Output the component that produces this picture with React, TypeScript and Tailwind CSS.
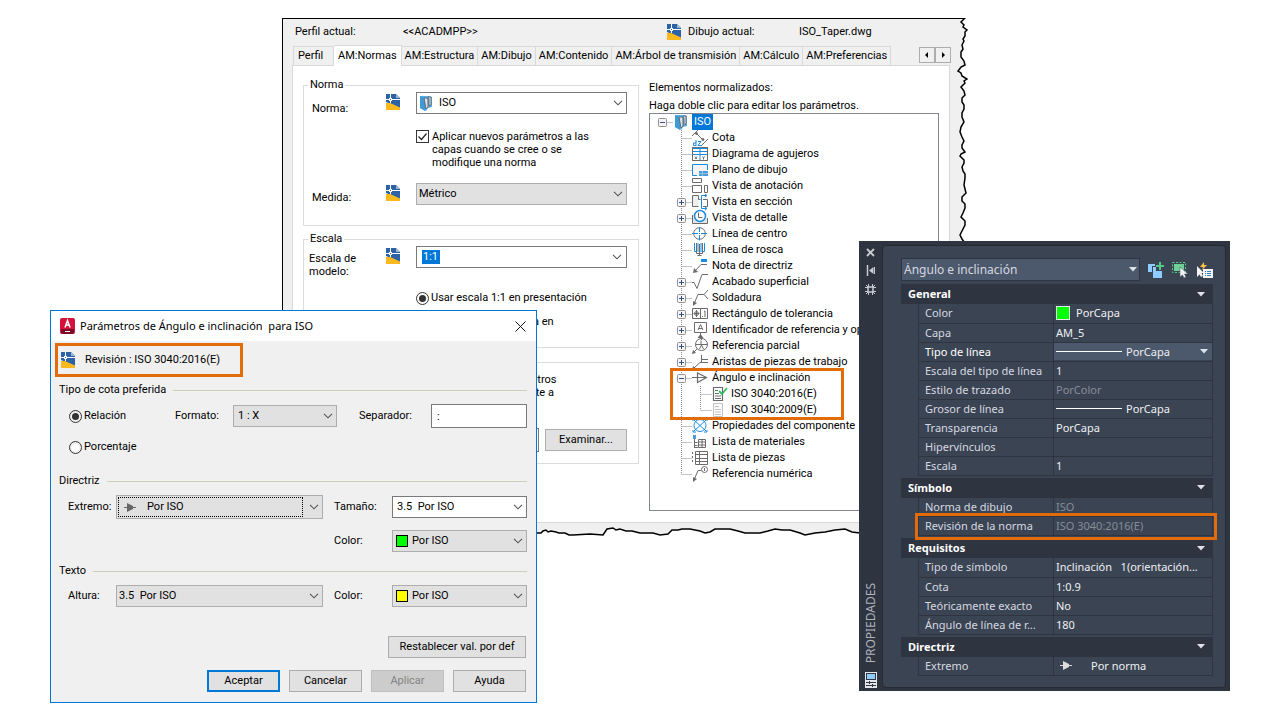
import { ReactNode } from 'react';
import clsx from 'clsx';

interface TreeItem {
  label: string;
  icon: ReactNode;
  expander?: 'plus' | 'minus';
  children?: { label: string; icon: ReactNode }[];
}

interface PropRow {
  name: string;
  value: string;
  kind?: 'text' | 'color' | 'line' | 'lineSelect' | 'arrow' | 'muted';
  marked?: boolean;
}

interface PropGroup {
  title: string;
  rows: PropRow[];
}

const GRAY = '#6b6b6b';
const BLUE = '#1b8ade';

/* ---------- icons ---------- */

function DwgIcon() {
  return (
    <svg width="15" height="16" viewBox="0 0 15 16" className="shrink-0">
      <path d="M0 0h10l4 4v10L0 8z" fill="#2c62a6" />
      <path d="M10 0l4 4h-4z" fill="#9fb6d3" />
      <path d="M0 9h4l10 4.500V16H0z" fill="#fbb81f" />
      <path d="M0 5.500h14M4.500 0v9" stroke="#fff" />
      <rect x="3" y="4" width="3" height="3" fill="#fff" />
      <rect x="4" y="5" width="1" height="1" fill="#2c62a6" />
    </svg>
  );
}

function BooksIcon() {
  return (
    <svg width="13" height="16" viewBox="0 0 13 16" className="shrink-0">
      <path d="M0 1h9l3 1v10l-4 1-2 3-6-3z" fill="#56b0e6" />
      <path d="M0 1l5 2v13l-5-3z" fill="#3f9bd6" />
      <path d="M4 3h3l1 1v8l-2 2z" fill="#d9e1e8" stroke="#5b6b78" />
      <path d="M8 2h3v8l-2 1V4z" fill="#e9edf1" stroke="#5b6b78" />
    </svg>
  );
}

function Chevron() {
  return (
    <svg width="10" height="6" viewBox="0 0 10 6" className="pointer-events-none absolute right-1 top-1/2 -translate-y-1/2">
      <path d="M1 .8l4 4 4-4" fill="none" stroke="#555" strokeWidth="1.1" />
    </svg>
  );
}

function TipIcon({ color }: { color: string }) {
  return (
    <svg width="12" height="9" viewBox="0 0 12 9" className="shrink-0">
      <path d="M0 4.500h12" stroke={color} />
      <path d="M3 0v9l6-3V3z" fill={color} />
    </svg>
  );
}

function Caret() {
  return (
    <svg width="8" height="5" viewBox="0 0 8 5" className="shrink-0">
      <path d="M0 0h8L4 4.500z" fill="#dfe3ea" />
    </svg>
  );
}

function Glyph({ children, width = 16 }: { children: ReactNode; width?: number }) {
  return (
    <svg width={width} height="16" viewBox={`0 0 ${width} 16`} fill="none" stroke={GRAY} className="shrink-0 overflow-visible">
      {children}
    </svg>
  );
}

const icons = {
  cota: (
    <Glyph>
      <path d="M0 6l6-6M10 15l6-6M4 3l7 7" />
      <circle cx="4.500" cy="3.500" r="1" fill={GRAY} />
      <circle cx="11" cy="9.500" r="1" fill={GRAY} />
      <path d="M4 10v6M4 13H1.500v2.500H4M6 11.500h3L6 15.500h4" stroke={BLUE} />
    </Glyph>
  ),
  agujeros: (
    <Glyph>
      <rect x=".5" y="1.500" width="15" height="13" fill="#fff" />
      <path d="M1 2.500h14M1 5.500h14M8 1v13" stroke={BLUE} />
      <path d="M1 8.500h14" stroke={BLUE} />
      <path d="M3 10.500l2 2.500M5 10.500L3 13M10.500 10.500l1 1.500 1-1.500M11.500 12v1.500" />
    </Glyph>
  ),
  plano: (
    <Glyph>
      <path d="M5 13.500H.5v-11h15V8" fill="#f3f3f3" stroke={BLUE} />
      <rect x="7" y="9" width="9" height="5" fill="#4b9bd5" stroke="none" />
      <path d="M7 11.500h9M10.500 9v5" stroke="#8fc4e8" />
    </Glyph>
  ),
  anotacion: (
    <Glyph>
      <path d="M.5 .5h9v4h-9zM.5 7.500h9v7h-9zM12.500 7.500h3v7h-3z" fill="#fff" />
    </Glyph>
  ),
  seccion: (
    <Glyph>
      <path d="M6.500 1.500h-6v11h6M6.500 1.500v4h2" fill="#efefef" />
      <path d="M11 5.500h4.500v7H11" />
      <path d="M14.500 1.500h-5v13h5M13 0l2 1.500L13 3M13 13l2 1.500-2 1.500" stroke={BLUE} />
    </Glyph>
  ),
  detalle: (
    <Glyph>
      <path d="M.5 5v8.500h15V8" fill="#e6e6e6" />
      <circle cx="8" cy="6" r="5.500" fill="#fff" stroke={BLUE} strokeWidth="1.500" />
      <path d="M6.500 2.500v5h4" />
    </Glyph>
  ),
  centro: (
    <Glyph>
      <circle cx="7.500" cy="7.500" r="5.800" />
      <path d="M0 7.500h6M9 7.500h6M7.500 1v5M7.500 9v5.500M7 7.500h1" stroke={BLUE} />
    </Glyph>
  ),
  rosca: (
    <Glyph>
      <path d="M4.500 1v10.500h6V1M5.500 13.500h4M7.500 2v12" />
      <path d="M2.500 1v8.500h2M12.500 1v8.500h-2M6 1v9M9 1v9" stroke={BLUE} />
    </Glyph>
  ),
  nota: (
    <Glyph>
      <path d="M2 14l7-7.500h6" />
      <path d="M1 15l1-5 4 4z" fill={GRAY} stroke="none" />
      <rect x="9" y="1" width="6" height="3" fill={BLUE} stroke="none" />
    </Glyph>
  ),
  acabado: (
    <Glyph>
      <path d="M0 8.500h2l3 6L10 .5h6" />
    </Glyph>
  ),
  soldadura: (
    <Glyph>
      <path d="M2 14L6 4.500h6M16 0l-4 4.500L16 9" />
      <path d="M1 16l0-5 4 2z" fill={GRAY} stroke="none" />
    </Glyph>
  ),
  tolerancia: (
    <Glyph>
      <path d="M.5 2.500h15v10h-15zM8.500 2.500v10" fill="#fff" />
      <circle cx="4.500" cy="7.500" r="2" />
      <path d="M1.500 7.500h6M4.500 4v7M10.500 10v1M12 5.500l1-.5v6" />
    </Glyph>
  ),
  identificador: (
    <Glyph>
      <path d="M2.500 .5h12v10h-12z" fill="#fff" />
      <path d="M6 8l2.500-5.500L11 8M7 6.500h3M8.500 11v4" />
      <path d="M5.500 16h6l-3-4z" fill={GRAY} stroke="none" />
    </Glyph>
  ),
  parcial: (
    <Glyph>
      <circle cx="9.500" cy="6.500" r="6" fill="#fff" />
      <path d="M3.500 6.500h12M9 2.500V6M7.500 11l2-4 2 4M9.500 0v2M5 11l-4 4" />
      <path d="M0 16l1-4 3 3z" fill={GRAY} stroke="none" />
    </Glyph>
  ),
  aristas: (
    <Glyph>
      <path d="M2 14l6-5.500h8M9.500 1v7.500M10 5.500h6" />
      <path d="M0 16l1-4 3.500 3z" fill={GRAY} stroke="none" />
    </Glyph>
  ),
  angulo: (
    <Glyph>
      <path d="M0 7.500h15M5.500 3v9.500l9-5z" fill="none" strokeWidth="1.200" />
    </Glyph>
  ),
  propiedades: (
    <Glyph>
      <circle cx="8" cy="7.500" r="6" stroke={BLUE} />
      <path d="M2 2l12 11M14 2L2 13M1 3V1h3M12 1h3v2M1 12v2h3M15 12v2h-3" stroke={BLUE} />
    </Glyph>
  ),
  materiales: (
    <Glyph>
      <rect x="1" y="1" width="3" height="4" fill="#4b9bd5" stroke="none" />
      <path d="M2.500 5v9M2.500 8.500h3M2.500 11.500h3M3 13.500h3M6.500 5.500h7v8h-7zM6.500 8h7M6.500 11h7M10 5v9" />
    </Glyph>
  ),
  piezas: (
    <Glyph>
      <path d="M3.500 1.500h12v13h-12zM3.500 4.500h12M3.500 8.500h12M3.500 11.500h12M7.500 1.500v13" fill="#fff" />
      <path d="M.5 2v12" strokeDasharray="2 2" />
    </Glyph>
  ),
  numerica: (
    <Glyph>
      <circle cx="12.500" cy="3.500" r="3" />
      <path d="M2 14l4-9.500h3M12.500 2v3" />
      <path d="M1 16l0-5 4 2z" fill={GRAY} stroke="none" />
    </Glyph>
  ),
  docOk: (
    <Glyph width={15}>
      <path d="M1.500 1.500h9v13h-9z" fill="#fff" strokeWidth="1.200" />
      <path d="M3 4.500h3M3 7.500h4M3 10h6M3 12.500h6" />
      <path d="M7 5l3 3 5-6" stroke="#2dbd5a" strokeWidth="1.800" />
    </Glyph>
  ),
  doc: (
    <Glyph width={15}>
      <path d="M1.500 1.500h9v13h-9z" fill="#fafafa" stroke="#c4c4c4" />
      <path d="M3 4.500h4M3 7.500h6M3 10h6M3 12.500h6" stroke="#c4c4c4" />
    </Glyph>
  ),
};

/* ---------- data ---------- */

const tabs = [
  'Perfil',
  'AM:Normas',
  'AM:Estructura',
  'AM:Dibujo',
  'AM:Contenido',
  'AM:Árbol de transmisión',
  'AM:Cálculo',
  'AM:Preferencias',
];

const tree: TreeItem[] = [
  { label: 'Cota', icon: icons.cota },
  { label: 'Diagrama de agujeros', icon: icons.agujeros },
  { label: 'Plano de dibujo', icon: icons.plano },
  { label: 'Vista de anotación', icon: icons.anotacion },
  { label: 'Vista en sección', icon: icons.seccion, expander: 'plus' },
  { label: 'Vista de detalle', icon: icons.detalle, expander: 'plus' },
  { label: 'Línea de centro', icon: icons.centro },
  { label: 'Línea de rosca', icon: icons.rosca },
  { label: 'Nota de directriz', icon: icons.nota },
  { label: 'Acabado superficial', icon: icons.acabado, expander: 'plus' },
  { label: 'Soldadura', icon: icons.soldadura, expander: 'plus' },
  { label: 'Rectángulo de tolerancia', icon: icons.tolerancia, expander: 'plus' },
  { label: 'Identificador de referencia y op', icon: icons.identificador, expander: 'plus' },
  { label: 'Referencia parcial', icon: icons.parcial, expander: 'plus' },
  { label: 'Aristas de piezas de trabajo', icon: icons.aristas, expander: 'plus' },
  {
    label: 'Ángulo e inclinación',
    icon: icons.angulo,
    expander: 'minus',
    children: [
      { label: 'ISO 3040:2016(E)', icon: icons.docOk },
      { label: 'ISO 3040:2009(E)', icon: icons.doc },
    ],
  },
  { label: 'Propiedades del componente', icon: icons.propiedades },
  { label: 'Lista de materiales', icon: icons.materiales },
  { label: 'Lista de piezas', icon: icons.piezas },
  { label: 'Referencia numérica', icon: icons.numerica },
];

const groups: PropGroup[] = [
  {
    title: 'General',
    rows: [
      { name: 'Color', value: 'PorCapa', kind: 'color' },
      { name: 'Capa', value: 'AM_5' },
      { name: 'Tipo de línea', value: 'PorCapa', kind: 'lineSelect' },
      { name: 'Escala del tipo de línea', value: '1' },
      { name: 'Estilo de trazado', value: 'PorColor', kind: 'muted' },
      { name: 'Grosor de línea', value: 'PorCapa', kind: 'line' },
      { name: 'Transparencia', value: 'PorCapa' },
      { name: 'Hipervínculos', value: '' },
      { name: 'Escala', value: '1' },
    ],
  },
  {
    title: 'Símbolo',
    rows: [
      { name: 'Norma de dibujo', value: 'ISO', kind: 'muted' },
      { name: 'Revisión de la norma', value: 'ISO 3040:2016(E)', kind: 'muted', marked: true },
    ],
  },
  {
    title: 'Requisitos',
    rows: [
      { name: 'Tipo de símbolo', value: 'Inclinación\u00a0\u00a0 1(orientación...' },
      { name: 'Cota', value: '1:0.9' },
      { name: 'Teóricamente exacto', value: 'No' },
      { name: 'Ángulo de línea de r...', value: '180' },
    ],
  },
  { title: 'Directriz', rows: [{ name: 'Extremo', value: 'Por norma', kind: 'arrow' }] },
];

/* ---------- shared controls ---------- */

interface SelectBoxProps {
  id: string;
  value: string;
  light?: boolean;
  icon?: ReactNode;
  className?: string;
  pad?: string;
  focused?: boolean;
}

function SelectBox({ id, value, light, icon, className = 'h-[22px]', pad = 'pl-1', focused }: SelectBoxProps) {
  return (
    <div className={clsx('relative', className)}>
      <select
        id={id}
        className={clsx(
          'block h-full w-full appearance-none border pr-5 outline-none',
          light ? 'border-[#7a7a7a] bg-white' : 'border-[#adadad] bg-[#e1e1e1]',
          pad,
        )}
      >
        <option>{value}</option>
      </select>
      {icon && <span className="pointer-events-none absolute inset-y-0 left-1 flex items-center">{icon}</span>}
      {focused && <span className="pointer-events-none absolute inset-y-0.5 left-0.5 right-5 border border-dotted border-black" />}
      <Chevron />
    </div>
  );
}

function Swatch({ className }: { className: string }) {
  return <span className={clsx('block size-3 border border-black', className)} />;
}

function Radio({ label, name, checked }: { label: string; name: string; checked?: boolean }) {
  return (
    <label className="flex items-center gap-0.5 whitespace-nowrap">
      <input
        type="radio"
        name={name}
        defaultChecked={checked}
        className="size-[13px] shrink-0 appearance-none rounded-full border border-[#333] bg-white bg-clip-content p-0.5 checked:bg-[#333]"
      />
      {label}
    </label>
  );
}

function DialogButton({ children, className = 'w-[73px]', disabled, primary }: { children: ReactNode; className?: string; disabled?: boolean; primary?: boolean }) {
  return (
    <button
      type="button"
      disabled={disabled}
      className={clsx(
        'h-[22px]',
        className,
        primary && 'border-2 border-[#0078d7] bg-[#e1e1e1]',
        disabled && 'border border-[#bfbfbf] bg-[#cccccc] text-[#838383]',
        !primary && !disabled && 'border border-[#adadad] bg-[#e1e1e1]',
      )}
    >
      {children}
    </button>
  );
}

/* ---------- options window ---------- */

// Dotted tree lines with the optional +/- box
function Gutter({ expander, last, nested, root }: { expander?: 'plus' | 'minus'; last?: boolean; nested?: boolean; root?: boolean }) {
  const width = nested ? 35 : 15;
  const joint = nested ? 23.5 : 4.5;
  return (
    <svg width={width} height="16" viewBox={`0 0 ${width} 16`} fill="none" className="shrink-0">
      {nested && <path d="M4.500 0v16" stroke="#8a8a8a" strokeDasharray="1 1" />}
      {!root && <path d={`M${joint} 0v${last ? 8 : 16}`} stroke="#8a8a8a" strokeDasharray="1 1" />}
      <path d={`M${joint} 8.500H${width}`} stroke="#8a8a8a" strokeDasharray="1 1" />
      {expander && (
        <>
          <rect x=".5" y="4.500" width="8" height="8" rx="1" fill="#f4f4f4" stroke="#919191" />
          <path d={expander === 'plus' ? 'M2 8.500h5M4.500 6v5' : 'M2 8.500h5'} stroke="#35508f" />
        </>
      )}
    </svg>
  );
}

function StandardsTree() {
  return (
    <div className="overflow-hidden whitespace-nowrap border border-[#828790] bg-white pb-7">
      <div className="flex h-4 items-center pl-2">
        <Gutter expander="minus" root />
        <span className="flex w-[19px] pl-0.5"><BooksIcon /></span>
        <span className="bg-[#0078d7] px-0.5 leading-4 text-white">ISO</span>
      </div>
      <ul>
        {tree.map((item, i) => (
          <li key={item.label} className="relative">
            <div className="flex h-4 items-center pl-[27px]">
              <Gutter expander={item.expander} last={i === tree.length - 1} />
              {item.icon}
              <span className="pl-1">{item.label}</span>
            </div>
            {item.children && (
              <>
                <ul>
                  {item.children.map((child, j) => (
                    <li key={child.label} className="flex h-4 items-center pl-[27px]">
                      <Gutter nested last={j === 1} />
                      {child.icon}
                      <span className="pl-1">{child.label}</span>
                    </li>
                  ))}
                </ul>
                <span className="pointer-events-none absolute -inset-y-0.5 left-5 z-10 w-[174px] border-[3px] border-[#e36c0a]" />
              </>
            )}
          </li>
        ))}
      </ul>
    </div>
  );
}

function TornEdges() {
  return (
    <>
      <svg viewBox="0 0 12 520" width="12" height="520" className="absolute -top-px right-0">
        <path
          d="M20 -3H9V0L5 4L8 7L7 9L11 12L9 14V18L7 21L8 23L6 27L7 31L5 34V39L8 43L9 47L5 49L2 53L5 55L6 58L11 61L8 63L9 65L5 69L8 73L9 77L6 80V84L8 87V91L6 95V99L8 104L5 109L4 114L6 119L8 123L6 127V130L9 134L5 136L4 138L8 142V145L6 149L7 153L9 156V160L8 167L10 175L6 179V183L9 186V190L7 195L5 199L9 203V207L6 213L4 217L6 221L9 225V530H20z"
          fill="#fff"
          stroke="#000"
          strokeWidth="1.500"
        />
      </svg>
      <svg viewBox="0 0 686 14" width="686" height="14" className="absolute -bottom-0.5 -left-px">
        <path
          d="M-3 20V8H255L259 8L261 6L264 5L266 7L269 6L274 7L277 8L283 8L287 10H291L308 9L321 10L325 4L331 3L334 5L338 4L344 6L350 6L358 8H371L378 10L386 9L390 5L396 5L400 4L408 4L418 6L423 8L428 7L433 4L448 4L456 6L463 8H478L486 6L493 4L500 5L508 5L518 8L523 10L533 8L543 7L553 5L563 4L570 7L578 8H700V20z"
          fill="#fff"
          stroke="#000"
          strokeWidth="1.500"
        />
      </svg>
    </>
  );
}

function OptionsWindow() {
  return (
    <section className="absolute left-[282px] top-[18px] w-[686px] border-l border-t border-black bg-[#f0f0f0] pb-[14px]">
      <header className="flex h-[26px] items-center pl-3">
        <span className="w-[108px]">Perfil actual:</span>
        <span className="w-[264px]">&lt;&lt;ACADMPP&gt;&gt;</span>
        <DwgIcon />
        <span className="w-[117px] pl-1.5">Dibujo actual:</span>
        <span>ISO_Taper.dwg</span>
      </header>
      <div className="flex items-end justify-between pl-[10px] pr-[17px]">
        <nav className="flex items-end whitespace-nowrap">
          {tabs.map((tab, i) => (
            <button
              key={tab}
              type="button"
              className={clsx(
                'border-t border-r border-[#d9d9d9]',
                i === 1 && 'relative -mb-px h-[21px] bg-white px-1',
                i === 0 && 'h-[19px] w-[41px] border-l pl-1 text-left',
                i > 1 && 'h-[19px] px-[3px]',
              )}
            >
              {tab}
            </button>
          ))}
        </nav>
        <div className="flex pb-0.5">
          {['M5 1v6L2 4z', 'M3 1v6l3-3z'].map((d, i) => (
            <button key={d} type="button" aria-label={i ? 'Siguiente' : 'Anterior'} className="flex h-4 w-4 items-center justify-center border border-[#adadad] bg-[#f0f0f0]">
              <svg width="8" height="8" viewBox="0 0 8 8"><path d={d} fill="#000" /></svg>
            </button>
          ))}
        </div>
      </div>
      <div className="ml-[9px] mr-[18px] flex gap-[10px] border border-[#d9d9d9] bg-white px-[10px] pb-[11px] pt-3">
        <div className="w-[336px]">
          <fieldset className="border border-[#dcdcdc] pb-5">
            <legend className="ml-1 px-0.5 leading-[14px]">Norma</legend>
            <div className="grid grid-cols-[74px_30px_1fr] items-start gap-y-[14px] pl-2 pr-[11px]">
              <label htmlFor="norma" className="pt-[10px]">Norma:</label>
              <span className="pt-0.5"><DwgIcon /></span>
              <SelectBox id="norma" value="ISO" light icon={<BooksIcon />} pad="pl-[22px]" />
              <label className="col-start-3 flex gap-[3px] leading-[13px]">
                <span className="relative flex">
                  <input type="checkbox" defaultChecked className="size-[13px] shrink-0 appearance-none border border-[#333] bg-white" />
                  <svg width="13" height="13" viewBox="0 0 13 13" className="absolute left-0 top-0">
                    <path d="M2.500 6.500l3 3 5-6" fill="none" stroke="#222" strokeWidth="1.200" />
                  </svg>
                </span>
                <span>
                  Aplicar nuevos parámetros a las<br />capas cuando se cree o se<br />modifique una norma
                </span>
              </label>
              <label htmlFor="medida" className="pt-2">Medida:</label>
              <span className="pt-0.5"><DwgIcon /></span>
              <SelectBox id="medida" value="Métrico" pad="pl-0.5" />
            </div>
          </fieldset>
          <fieldset className="mt-[6px] border border-[#dcdcdc] pb-[18px]">
            <legend className="ml-1 px-0.5 leading-[14px]">Escala</legend>
            <div className="grid grid-cols-[77px_30px_1fr] items-start pl-[5px] pr-[11px]">
              <label htmlFor="escala" className="pt-[6px] leading-[13px]">Escala de<br />modelo:</label>
              <span className="pt-0.5"><DwgIcon /></span>
              <div className="relative flex h-[22px] items-center border border-[#7a7a7a] bg-white pl-[5px]">
                <input id="escala" defaultValue="1:1" className="h-[14px] w-[18px] bg-[#0078d7] pl-px text-white outline-none" />
                <Chevron />
              </div>
              <div className="col-start-3 grid gap-[10px] pt-[13px]">
                <Radio name="presentacion" label="Usar escala 1:1 en presentación" checked />
                <Radio name="presentacion" label="Usar escala adecuada en" />
              </div>
            </div>
          </fieldset>
          <fieldset className="mt-[14px] grid justify-items-end border border-[#dcdcdc] pb-[11px] pr-[11px] pt-[10px]">
            <p className="w-[210px] pl-6 leading-[13px]">Guardar los parámetros<br />y aplicar previamente a</p>
            <div className="mt-[29px] flex items-center gap-1.5">
              <input aria-label="Plantilla" className="h-6 w-[190px] border border-[#7a7a7a] bg-white" />
              <DialogButton className="w-[82px]">Examinar...</DialogButton>
            </div>
          </fieldset>
        </div>
        <div className="min-w-0 flex-1 pt-[3px]">
          <p>Elementos normalizados:</p>
          <p className="mt-1">Haga doble clic para editar los parámetros.</p>
          <StandardsTree />
        </div>
      </div>
      <TornEdges />
    </section>
  );
}

/* ---------- parameters dialog ---------- */

function Heading({ children }: { children: ReactNode }) {
  return (
    <h3 className="flex items-center gap-[7px]">
      {children}
      <span className="h-px flex-1 bg-[#cdd0b8]" />
    </h3>
  );
}

function ParametersDialog() {
  return (
    <section className="absolute left-[50px] top-[310px] z-10 w-[487px] border border-[#0078d7] bg-[#f0f0f0] pb-[10px]">
      <header className="flex h-[30px] items-center bg-white pl-[9px] pr-[10px]">
        <svg width="15" height="16" viewBox="0 0 15 16">
          <rect width="15" height="16" rx="2" fill="#d5123c" />
          <path d="M1 11h13v3a2 2 0 0 1-2 2H3a2 2 0 0 1-2-2z" fill="#7c0c26" />
          <path d="M5 9.500l2.500-7 2.500 7M6 7h3" fill="none" stroke="#fff" strokeWidth="1.500" />
          <path d="M5 13.500h5" stroke="#fff" />
        </svg>
        <h2 className="flex-1 whitespace-pre pl-[5px] font-['Noto_Sans',sans-serif]">Parámetros de Ángulo e inclinación  para ISO</h2>
        <button type="button" aria-label="Cerrar">
          <svg width="11" height="11" viewBox="0 0 11 11"><path d="M.5 .5l10 10M10.500 .5l-10 10" stroke="#111" /></svg>
        </button>
      </header>
      <div className="pl-2 pr-[9px] pt-0.5">
        <div className="-ml-1 flex h-[34px] w-[188px] items-center gap-[9px] border-[3px] border-[#e36c0a] pl-[3px]">
          <DwgIcon />
          Revisión : ISO 3040:2016(E)
        </div>
        <div className="mt-[6px] grid grid-cols-1 gap-[7px]">
          <Heading>Tipo de cota preferida</Heading>
          <div className="flex items-center pl-[10px]">
            <div className="w-[106px]"><Radio name="tipo" label="Relación" checked /></div>
            <label htmlFor="formato" className="w-[58px]">Formato:</label>
            <SelectBox id="formato" value="1 : X" className="h-[22px] w-[104px]" pad="pl-1" />
            <label htmlFor="separador" className="w-[94px] pl-[22px]">Separador:</label>
            <input id="separador" defaultValue=":" className="h-6 min-w-0 flex-1 border border-[#7a7a7a] bg-white pl-[5px] outline-none" />
          </div>
          <div className="pl-[10px] pt-[5px]"><Radio name="tipo" label="Porcentaje" /></div>
        </div>
        <div className="mt-5 grid grid-cols-1 gap-[7px]">
          <Heading>Directriz</Heading>
          <div className="grid grid-cols-[48px_207px_69px_1fr] items-center pl-[9px]">
            <label htmlFor="extremo">Extremo:</label>
            <SelectBox id="extremo" value="Por ISO" className="h-6" pad="pl-[30px]" icon={<span className="pl-1"><TipIcon color="#666" /></span>} focused />
            <label htmlFor="tamano" className="pl-[11px]">Tamaño:</label>
            <SelectBox id="tamano" value={'3.5\u00a0 Por ISO'} light />
            <label htmlFor="color1" className="col-start-3 pl-[11px] pt-[11px]">Color:</label>
            <SelectBox id="color1" value="Por ISO" className="mt-[11px] h-[22px]" pad="pl-[19px]" icon={<Swatch className="bg-[#00ff00]" />} />
          </div>
        </div>
        <div className="mt-3 grid grid-cols-1 gap-[7px]">
          <Heading>Texto</Heading>
          <div className="grid grid-cols-[48px_207px_69px_1fr] items-center pl-[9px]">
            <label htmlFor="altura">Altura:</label>
            <SelectBox id="altura" value={'3.5\u00a0 Por ISO'} pad="pl-0.5" />
            <label htmlFor="color2" className="pl-[11px]">Color:</label>
            <SelectBox id="color2" value="Por ISO" pad="pl-[19px]" icon={<Swatch className="bg-[#ffff00]" />} />
          </div>
        </div>
        <div className="mt-[29px] flex justify-end pr-px">
          <DialogButton className="w-[138px]">Restablecer val. por def</DialogButton>
        </div>
        <div className="mt-3 flex justify-end gap-[9px] pr-px">
          <DialogButton primary>Aceptar</DialogButton>
          <DialogButton>Cancelar</DialogButton>
          <DialogButton disabled>Aplicar</DialogButton>
          <DialogButton>Ayuda</DialogButton>
        </div>
      </div>
    </section>
  );
}

/* ---------- properties palette ---------- */

function PropValue({ row }: { row: PropRow }) {
  switch (row.kind) {
    case 'color':
      return (
        <span className="flex items-center gap-1.5">
          <span className="size-[14px] border border-[#e8e8e8] bg-[#00ff00]" />
          {row.value}
        </span>
      );
    case 'line':
      return (
        <span className="flex items-center gap-1">
          <span className="h-px w-[66px] bg-white" />
          {row.value}
        </span>
      );
    case 'lineSelect':
      return (
        <span className="relative -ml-0.5 flex h-[17px] items-center bg-[#4c586c]">
          <span className="pointer-events-none absolute left-0.5 h-px w-[66px] bg-white" />
          <select aria-label={row.name} className="h-full w-full appearance-none pl-[72px] outline-none">
            <option>{row.value}</option>
          </select>
          <span className="pointer-events-none absolute right-1"><Caret /></span>
        </span>
      );
    case 'arrow':
      return (
        <span className="flex items-center gap-[19px] pl-1">
          <TipIcon color="#dcdcdc" />
          {row.value}
        </span>
      );
    default:
      return <>{row.value}</>;
  }
}

function PropertiesPalette() {
  return (
    <aside className="absolute left-[859px] top-[241px] z-10 flex w-[371px] bg-[#2e3440] pb-[3px] pr-1 pt-1 font-['Noto_Sans',sans-serif] text-[#d5d9e0]">
      <div className="flex w-[23px] flex-col items-center justify-between pt-[3px]">
        <div className="flex flex-col items-center gap-2">
          <button type="button" aria-label="Cerrar">
            <svg width="9" height="9" viewBox="0 0 9 9"><path d="M1 1l7 7M8 1L1 8" stroke="#c8ccd2" strokeWidth="1.800" /></svg>
          </button>
          <button type="button" aria-label="Ocultar">
            <svg width="10" height="11" viewBox="0 0 10 11"><path d="M1.500 0v11" stroke="#c8ccd2" strokeWidth="1.500" /><path d="M7.500 2v7L3 5.500z" fill="#c8ccd2" /><path d="M8.500 2v7" stroke="#c8ccd2" /></svg>
          </button>
          <button type="button" aria-label="Opciones">
            <svg width="11" height="11" viewBox="0 0 11 11">
              <path d="M3.500 0v3M7.500 0v3M3.500 8v3M7.500 8v3M0 3.500h3M8 3.500h3M0 7.500h3M8 7.500h3M1 1l2 2M10 1L8 3M1 10l2-2M10 10L8 8" stroke="#c8ccd2" />
              <rect x="3" y="3" width="5" height="5" rx="1" fill="none" stroke="#c8ccd2" strokeWidth="1.500" />
            </svg>
          </button>
        </div>
        <div className="flex flex-col items-center gap-[9px]">
          <span className="rotate-180 text-[12px] leading-4 text-[#aeb3bc] [writing-mode:vertical-rl]">PROPIEDADES</span>
          <svg width="12" height="16" viewBox="0 0 12 16">
            <rect width="12" height="16" fill="#e4e6ea" />
            <rect x="1.500" y="1.500" width="9" height="6" fill="#8ecbff" stroke="#2e3440" />
            <path d="M1 10.500h10M1 13.500h10M4.500 9v3M7.500 12v3" stroke="#2e3440" />
          </svg>
        </div>
      </div>
      <div className="flex-1 rounded border border-[#252a34] bg-[#3b4453] pb-[11px] pl-[18px] pr-3 pt-3">
        <div className="flex items-center gap-2">
          <div className="relative h-[23px] flex-1">
            <select aria-label="Objeto" className="h-full w-full appearance-none border border-[#2e3440] bg-[#4c586c] pl-0.5 text-[12px] outline-none">
              <option>Ángulo e inclinación</option>
            </select>
            <span className="pointer-events-none absolute inset-y-0 right-[3px] flex items-center"><Caret /></span>
          </div>
          <button type="button" aria-label="Añadir selección">
            <svg width="16" height="16" viewBox="0 0 16 16"><path d="M0 2h7v2H4v6H0z" fill="#8ecbff" /><path d="M5 5h3v4h6v7H5z" fill="#8ecbff" /><path d="M12 0v8M8 4h8" stroke="#56c98a" strokeWidth="2" /></svg>
          </button>
          <button type="button" aria-label="Seleccionar objetos">
            <svg width="16" height="16" viewBox="0 0 16 16"><path d="M.5 .5h13v10H.5z" fill="none" stroke="#56c98a" strokeDasharray="2 1.500" /><rect x="2" y="2" width="10" height="7" fill="#6fcf97" /><path d="M8 5v10l2.500-2 1.500 3 2-1-1.500-3H16z" fill="#f3f3f3" stroke="#3b4453" strokeWidth=".5" /></svg>
          </button>
          <button type="button" aria-label="Selección rápida">
            <svg width="17" height="16" viewBox="0 0 17 16"><path d="M8 0L4 5h3L6 8l5-5H8z" fill="#fcc04d" /><path d="M1 4v11l2.500-2.500L5 15l2-1-1.500-3H8z" fill="#f3f3f3" /><rect x="7" y="7" width="10" height="9" fill="#f3f3f3" /><path d="M9 9.500h1M11 9.500h4M9 11.500h1M11 11.500h4M9 13.500h1M11 13.500h4" stroke="#2f80c8" /></svg>
          </button>
        </div>
        <div className="mt-[3px] grid grid-cols-1 gap-0.5">
          {groups.map((group) => (
            <div key={group.title}>
              <button type="button" className="flex h-5 w-full items-center justify-between bg-[#2e3440] pl-[7px] pr-2 font-bold text-white">
                {group.title}
                <Caret />
              </button>
              <div className="pl-[17px]">
                <table className="w-full table-fixed border-collapse whitespace-nowrap">
                  <tbody>
                    {group.rows.map((row) => (
                      <tr key={row.name} className="relative h-[19px]">
                        <th
                          scope="row"
                          className={clsx(
                            'h-[19px] w-[135px] border border-t-0 border-[#2e3440] p-0 pl-1.5 text-left font-normal leading-4',
                            row.kind === 'lineSelect' && 'text-white',
                          )}
                        >
                          {row.name}
                          {row.marked && <span className="pointer-events-none absolute -inset-1 border-[3px] border-[#e36c0a]" />}
                        </th>
                        <td
                          className={clsx(
                            'h-[19px] border border-t-0 border-[#2e3440] p-0 pl-0.5 leading-4',
                            row.kind === 'muted' ? 'text-[#868d99]' : 'text-[#eef0f4]',
                          )}
                        >
                          <PropValue row={row} />
                        </td>
                      </tr>
                    ))}
                  </tbody>
                </table>
              </div>
            </div>
          ))}
        </div>
      </div>
    </aside>
  );
}

export default function App() {
  return (
    <main className="relative min-h-screen overflow-hidden bg-white font-[Roboto,sans-serif] text-[11px] leading-[14px] text-black">
      <OptionsWindow />
      <ParametersDialog />
      <PropertiesPalette />
    </main>
  );
}
